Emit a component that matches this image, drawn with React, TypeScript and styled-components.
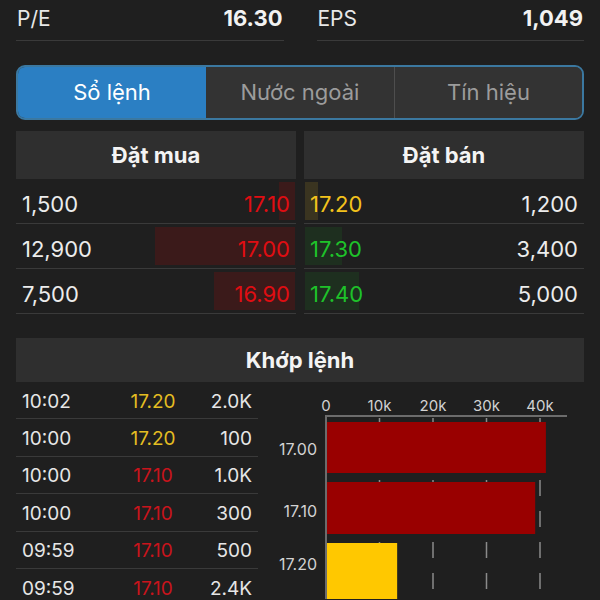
import React from "react";
import styled, { createGlobalStyle } from "styled-components";

const GlobalStyle = createGlobalStyle`
  html, body { margin: 0; padding: 0; background: #1f1f1f; }
  body { font-family: Inter, "Noto Sans", "Liberation Sans", sans-serif; -webkit-font-smoothing: antialiased; }
`;

const Page = styled.div`
  width: 600px;
  height: 600px;
  overflow: hidden;
  box-sizing: border-box;
  padding: 0 16px;
  background: #1f1f1f;
  color: #ececec;
  display: flex;
  flex-direction: column;
  & > * {
    flex-shrink: 0;
  }
`;

const StatsRow = styled.div`
  display: grid;
  grid-template-columns: 1fr 1fr;
  column-gap: 33px;
`;

const Stat = styled.div`
  height: 41px;
  box-sizing: border-box;
  display: flex;
  align-items: center;
  justify-content: space-between;
  border-bottom: 1px solid #3a3a3a;
  padding: 0 1px 4px 1px;
  font-size: 21px;
`;

const StatLabel = styled.span`
  color: #e8e8e8;
`;

const StatValue = styled.span`
  font-weight: 700;
  font-size: 22px;
  color: #f2f2f2;
`;

const Segmented = styled.div`
  margin-top: 24px;
  height: 55px;
  box-sizing: border-box;
  border: 2px solid #3b78a0;
  border-radius: 9px;
  overflow: hidden;
  display: grid;
  grid-template-columns: 1fr 1fr 1fr;
  background: #333333;
`;

const Tab = styled.div<{ $active?: boolean; $divider?: boolean }>`
  display: flex;
  align-items: center;
  justify-content: center;
  font-size: 22px;
  padding-bottom: 1px;
  background: ${(p) => (p.$active ? "#2b7fc3" : "#333333")};
  color: ${(p) => (p.$active ? "#ffffff" : "#9c9c9c")};
  border-left: ${(p) => (p.$divider ? "1px solid #4e4e4e" : "none")};
`;

const OrderBook = styled.div`
  margin-top: 11px;
  display: grid;
  grid-template-columns: 280px 1fr;
  column-gap: 8px;
`;

const Column = styled.div`
  display: flex;
  flex-direction: column;
`;

const SectionHeader = styled.div<{ $h: number }>`
  height: ${(p) => p.$h}px;
  background: #2f2f2f;
  display: flex;
  align-items: center;
  justify-content: center;
  font-size: 22px;
  font-weight: 700;
  color: #f4f4f4;
`;

const BookRow = styled.div`
  position: relative;
  height: 45px;
  box-sizing: border-box;
  border-bottom: 1px solid #3a3a3a;
  display: flex;
  align-items: center;
  justify-content: space-between;
  padding: 5px 6px 0 6px;
  font-size: 22px;
`;

const Depth = styled.div<{ $side: "bid" | "ask"; $tone: string }>`
  position: absolute;
  top: 3px;
  bottom: 3px;
  ${(p) => (p.$side === "bid" ? "right: 1px;" : "left: 1px;")}
  background: ${(p) => p.$tone};
`;

const Cell = styled.span<{ $color?: string }>`
  position: relative;
  color: ${(p) => p.$color || "#ececec"};
`;

const Match = styled.div`
  margin-top: 24px;
  display: flex;
  flex-direction: column;
`;

const MatchBody = styled.div`
  display: grid;
  grid-template-columns: 242px 1fr;
  column-gap: 4px;
`;

const TradeList = styled.div`
  display: flex;
  flex-direction: column;
`;

const TradeRow = styled.div`
  height: 37.4px;
  box-sizing: border-box;
  border-bottom: 1px solid #3a3a3a;
  display: grid;
  grid-template-columns: 106px 50px 1fr;
  align-items: center;
  padding: 2px 6px 0 6px;
  font-size: 19px;
`;

const TradeTime = styled.span`
  color: #e6e6e6;
`;

const TradePrice = styled.span<{ $color: string }>`
  text-align: center;
  color: ${(p) => p.$color};
`;

const TradeVol = styled.span`
  text-align: right;
  color: #e6e6e6;
`;

const ChartSvg = styled.svg`
  display: block;
  font-family: Inter, "Noto Sans", "Liberation Sans", sans-serif;
`;

const RED = "#e00d12";
const GREEN = "#1ec22a";
const YELLOW = "#f3c21c";
const TRADE_RED = "#c8141c";
const TRADE_YELLOW = "#e4bd22";

const bids = [
  { vol: "1,500", v: 1500, price: "17.10" },
  { vol: "12,900", v: 12900, price: "17.00" },
  { vol: "7,500", v: 7500, price: "16.90" },
];
const asks = [
  { price: "17.20", v: 1200, vol: "1,200", color: YELLOW, tone: "#3a3420" },
  { price: "17.30", v: 3400, vol: "3,400", color: GREEN, tone: "#1e2f1f" },
  { price: "17.40", v: 5000, vol: "5,000", color: GREEN, tone: "#1e2f1f" },
];
const maxVol = 12900;

const trades = [
  { t: "10:02", p: "17.20", c: TRADE_YELLOW, v: "2.0K" },
  { t: "10:00", p: "17.20", c: TRADE_YELLOW, v: "100" },
  { t: "10:00", p: "17.10", c: TRADE_RED, v: "1.0K" },
  { t: "10:00", p: "17.10", c: TRADE_RED, v: "300" },
  { t: "09:59", p: "17.10", c: TRADE_RED, v: "500" },
  { t: "09:59", p: "17.10", c: TRADE_RED, v: "2.4K" },
];

const X0 = 64;
const PER_K = 5.35;
const bars = [
  { label: "17.00", value: 41.1, y: 40, h: 51, ly: 65, color: "#990000" },
  { label: "17.10", value: 39.1, y: 100, h: 52, ly: 127, color: "#990000" },
  { label: "17.20", value: 13.3, y: 161, h: 60, ly: 180, color: "#ffc800" },
];

function Chart() {
  const ticks = [0, 10, 20, 30, 40];
  return (
    <ChartSvg width={322} height={217} viewBox="0 0 322 217">
      {ticks.slice(1).map((k) => (
        <line
          key={k}
          x1={X0 + k * PER_K}
          x2={X0 + k * PER_K}
          y1={36}
          y2={217}
          stroke="#8a8a8a"
          strokeWidth={1.5}
          strokeDasharray="16 15"
        />
      ))}
      <line x1={X0} x2={305} y1={34} y2={34} stroke="#6c6c6c" strokeWidth={2} />
      <line x1={X0} x2={X0} y1={33} y2={217} stroke="#6c6c6c" strokeWidth={2} />
      {ticks.map((k) => (
        <text
          key={k}
          x={X0 + k * PER_K}
          y={29}
          fill="#d2d2d2"
          fontSize={15}
          textAnchor="middle"
        >
          {k === 0 ? "0" : `${k}k`}
        </text>
      ))}
      {bars.map((b) => (
        <g key={b.label}>
          <rect x={X0 + 1} y={b.y} width={b.value * PER_K - 1} height={b.h} fill={b.color} />
          <text x={55} y={b.ly + 8} fill="#d2d2d2" fontSize={16} textAnchor="end">
            {b.label}
          </text>
        </g>
      ))}
    </ChartSvg>
  );
}

export default function App() {
  return (
    <>
      <GlobalStyle />
      <Page>
        <StatsRow>
          <Stat>
            <StatLabel>P/E</StatLabel>
            <StatValue>16.30</StatValue>
          </Stat>
          <Stat>
            <StatLabel>EPS</StatLabel>
            <StatValue>1,049</StatValue>
          </Stat>
        </StatsRow>

        <Segmented>
          <Tab $active>Sổ lệnh</Tab>
          <Tab>Nước ngoài</Tab>
          <Tab $divider>Tín hiệu</Tab>
        </Segmented>

        <OrderBook>
          <Column>
            <SectionHeader $h={48}>Đặt mua</SectionHeader>
            {bids.map((b) => (
              <BookRow key={b.price}>
                <Depth $side="bid" $tone="#3b1a1a" style={{ width: `${(b.v / maxVol) * 140}px` }} />
                <Cell>{b.vol}</Cell>
                <Cell $color={RED}>{b.price}</Cell>
              </BookRow>
            ))}
          </Column>
          <Column>
            <SectionHeader $h={48}>Đặt bán</SectionHeader>
            {asks.map((a) => (
              <BookRow key={a.price}>
                <Depth $side="ask" $tone={a.tone} style={{ width: `${(a.v / maxVol) * 140}px` }} />
                <Cell $color={a.color}>{a.price}</Cell>
                <Cell>{a.vol}</Cell>
              </BookRow>
            ))}
          </Column>
        </OrderBook>

        <Match>
          <SectionHeader $h={44}>Khớp lệnh</SectionHeader>
          <MatchBody>
            <TradeList>
              {trades.map((t, i) => (
                <TradeRow key={i}>
                  <TradeTime>{t.t}</TradeTime>
                  <TradePrice $color={t.c}>{t.p}</TradePrice>
                  <TradeVol>{t.v}</TradeVol>
                </TradeRow>
              ))}
            </TradeList>
            <Chart />
          </MatchBody>
        </Match>
      </Page>
    </>
  );
}
